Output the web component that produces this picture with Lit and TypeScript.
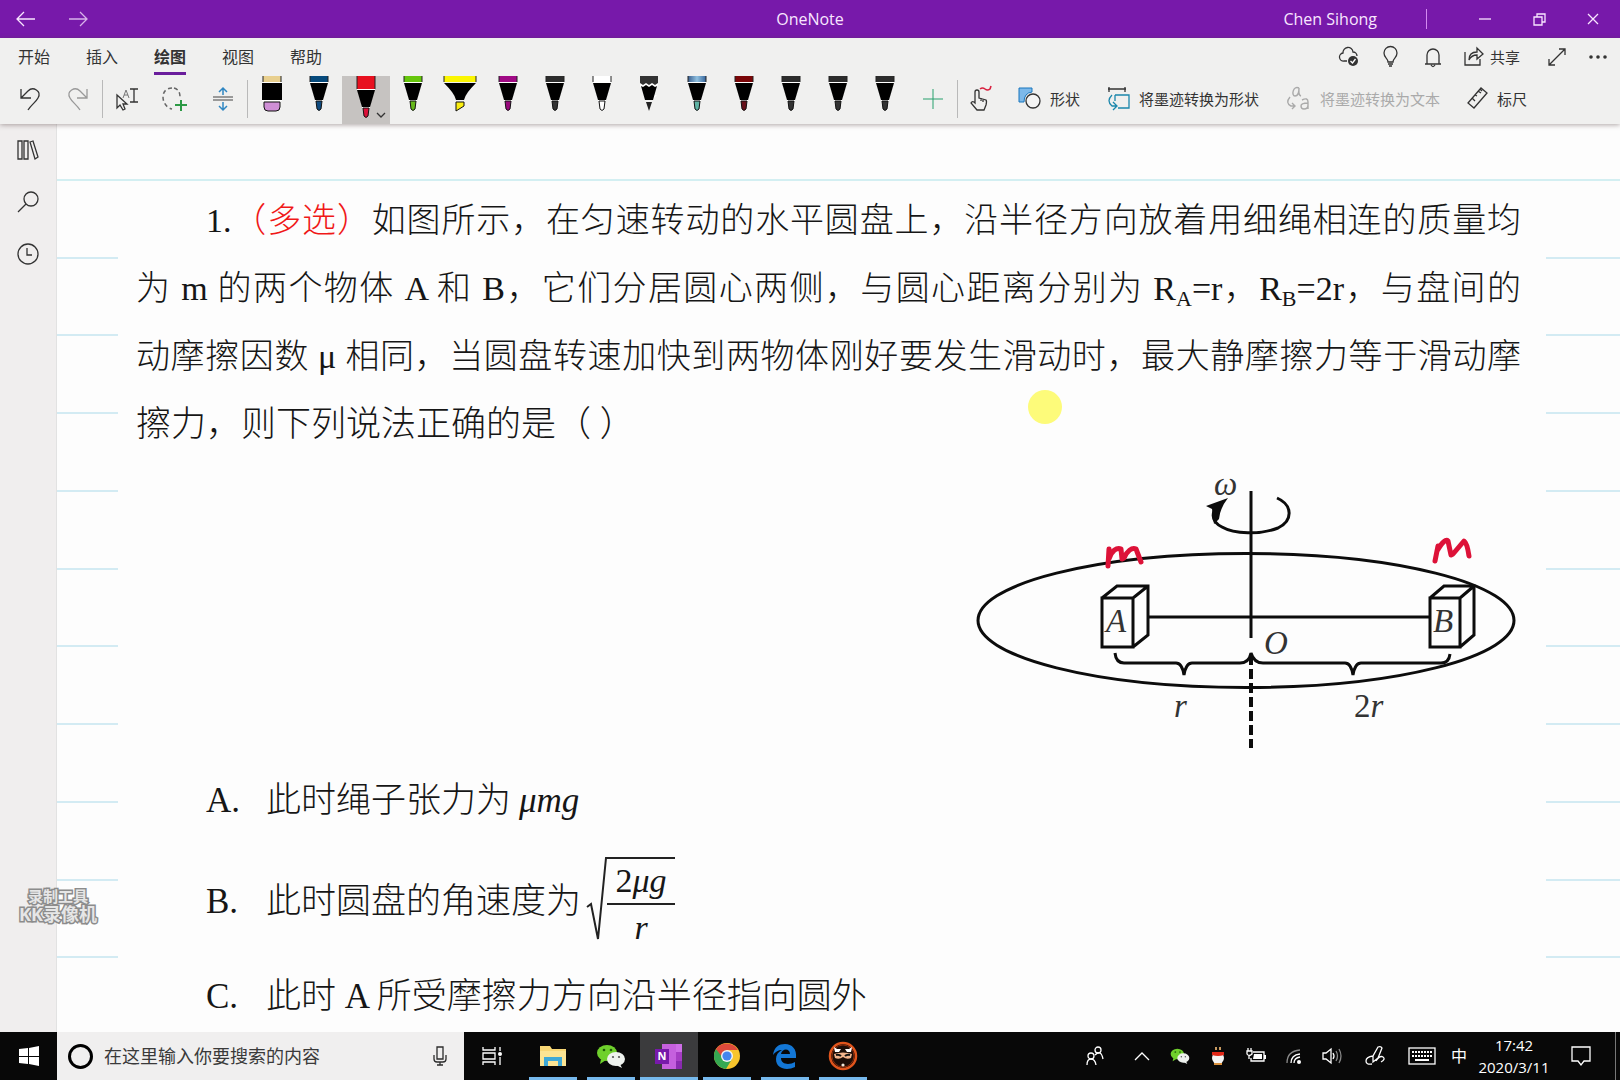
import { LitElement, html, svg, css, type TemplateResult } from "lit";
import { customElement } from "lit/decorators.js";
import { classMap } from "lit/directives/class-map.js";

interface Pen {
  name: string;
  cap: string;
  tip: string;
  kind?: "eraser" | "marker" | "pencil";
  on?: boolean;
}

const PENS: Pen[] = [
  { name: "橡皮擦", cap: "#e8cf8e", tip: "#cf8fd6", kind: "eraser" },
  { name: "蓝色笔", cap: "#064a7c", tip: "#0d4a80" },
  { name: "红色笔", cap: "#e8101f", tip: "#dc1038", on: true },
  { name: "绿色笔", cap: "#66c60c", tip: "#66b81a" },
  { name: "黄色荧光笔", cap: "#fbf602", tip: "#fbee10", kind: "marker" },
  { name: "紫色笔", cap: "#a00a85", tip: "#98087c" },
  { name: "黑色笔", cap: "#2c2c2c", tip: "#333333" },
  { name: "白色笔", cap: "#ffffff", tip: "#ffffff" },
  { name: "铅笔", cap: "#333333", tip: "#222222", kind: "pencil" },
  { name: "银河笔", cap: "url(#sky)", tip: "#5fb3a4" },
  { name: "熔岩笔", cap: "#7a0608", tip: "#66101a" },
  { name: "黑色笔 2", cap: "#2c2c2c", tip: "#333333" },
  { name: "黑色笔 3", cap: "#2c2c2c", tip: "#333333" },
  { name: "黑色笔 4", cap: "#2c2c2c", tip: "#333333" },
];

const icon = (w: number, h: number, body: unknown): TemplateResult =>
  html`<svg class="icon" width=${w} height=${h} viewBox="0 0 ${w} ${h}" aria-hidden="true">${body}</svg>`;

const penArt = (p: Pen) => {
  if (p.kind === "eraser")
    return svg`<rect x="8" y="0" width="18" height="6" fill=${p.cap}/><path d="M8 0v6M26 0v6" stroke="#222"/>
      <rect x="7" y="6" width="20" height="19" fill="#fff"/><rect x="7" y="7" width="20" height="17" fill="#000"/>
      <path d="M9 26h16v5q0 4-4 4h-8q-4 0-4-4z" fill=${p.tip} stroke="#111"/>`;
  if (p.kind === "marker")
    return svg`<rect x="1" y="0" width="32" height="6" fill=${p.cap}/><path d="M1 0v6M33 0v6" stroke="#222"/>
      <path d="M1 7h32q-5 5-8 9t-4 8h-8q-1-4-4-8t-8-9z" fill="#000"/>
      <path d="M13 26h8v4l-8 5z" fill=${p.tip} stroke="#111"/>`;
  if (p.kind === "pencil")
    return svg`<path d="M8 0h18v18l-6 6h-6L8 10z" fill="#fff"/><path d="M8 0h18v7l-3 2-3-2-3 2-3-2-3 2-3-2z" fill=${p.cap}/>
      <path d="M26 9v10h-5l5-10z" fill="#f0f0ef"/>
      <path d="M9 10l2 1 3-2 3 2 3-2 3 2 2-1-4 14h-8z" fill="#000"/><path d="M14 26h6l-3 9z" fill=${p.tip}/>`;
  const d = p.on ? 7 : 0;
  return svg`<rect x="8" y="0" width="18" height=${6 + d} fill=${p.cap}/><path d="M8 0v${6 + d}M26 0v${6 + d}" stroke="#222"/>
    <path d="M8 ${6 + d}h18v1h-18zM13 ${24 + d}h8v1h-8z" fill="#fff"/>
    <path d="M8 ${7 + d}h18l-5 17h-8z" fill="#000"/>
    <path d="M14 ${25 + d}h6l-1 8q-2 3-4 0z" fill=${p.tip} stroke="#111"/>`;
};

const BUBBLES = svg`<ellipse cx="11" cy="9" rx="10" ry="8" fill="#6fd02c"/><path d="M5 15l-1 5 6-4z" fill="#6fd02c"/>
  <circle cx="8" cy="6" r="1.3" fill="#1d5a08"/><circle cx="15" cy="6" r="1.3" fill="#1d5a08"/>
  <ellipse cx="20" cy="15" rx="9" ry="7" fill="#eef2ee"/><path d="M24 20l2 4-6-3z" fill="#eef2ee"/>
  <circle cx="17" cy="13" r="1.1" fill="#555"/><circle cx="23" cy="13" r="1.1" fill="#555"/>`;

const I = {
  back: icon(20, 16, svg`<path class="s" d="M19 8H1M8 1L1 8l7 7"/>`),
  forward: icon(20, 16, svg`<path class="s" d="M1 8h18M12 1l7 7-7 7"/>`),
  min: icon(12, 12, svg`<path class="s" d="M0 6h12"/>`),
  restore: icon(13, 13, svg`<path class="s" d="M1 4h8v8H1zM4 4V1h8v8H9"/>`),
  close: icon(12, 12, svg`<path class="s" d="M1 1l10 10M11 1L1 11"/>`),
  cloud: icon(22, 22, svg`<path class="s" d="M9 15H6a4 4 0 0 1-1-8 5 5 0 0 1 10-1 4 4 0 0 1 4 4"/><circle cx="15" cy="15" r="5" fill="#333"/><path d="M12.500 15l2 2 3-4" fill="none" stroke="#fff" stroke-width="1.300"/>`),
  bulb: icon(16, 22, svg`<path class="s" d="M5 16c0-4-4-4-4-9a6.500 6.500 0 0 1 13 0c0 5-4 5-4 9zM5 18h5M6 20h3"/>`),
  bell: icon(18, 20, svg`<path class="s" d="M1 17h16M3 17V8a6 6 0 0 1 12 0v9M7 18q2 3 4 0"/>`),
  share: icon(20, 20, svg`<path class="s" d="M1 6v13h15v-6M5 14c0-6 3-8 8-8V2l6 6-6 5V9c-4 0-6 1-8 5z"/>`),
  expand: icon(18, 18, svg`<path class="s" d="M1 17L17 1M11 1h6v6M1 11v6h6"/>`),
  dots: icon(20, 6, svg`<g fill="#333"><circle cx="3" cy="3" r="1.800"/><circle cx="10" cy="3" r="1.800"/><circle cx="17" cy="3" r="1.800"/></g>`),
  undo: icon(20, 24, svg`<path class="s" d="M1 2v9h10M1 11L8 4c5-5 14 0 10 7-2 4-7 7-10 12"/>`),
  redo: icon(20, 24, svg`<path class="s" d="M19 2v9H9M19 11l-7-7C7-1-2 4 2 11c2 4 7 7 10 12"/>`),
  select: icon(24, 24, svg`<path class="s" d="M2 8v13l3-3 3 5 2-1-2-5h4z"/><path d="M8 11l3-8 3 8M9 8h4" fill="none" stroke="#777"/><path class="s" d="M15 2h8M15 15h8M19 2v13"/>`),
  lasso: icon(26, 24, svg`<path d="M10 1C4 1 1 5 1 10c0 6 4 11 9 12M12 1c4 1 6 4 6 9" fill="none" stroke="#666" stroke-width="1.500" stroke-dasharray="4 3"/><path d="M19 13v11M13 18h12" stroke="#2c9a45" stroke-width="2"/>`),
  space: icon(22, 24, svg`<path d="M1 10h20M1 13h20" stroke="#444"/><path d="M11 8V1M7 5l4-4 4 4M11 15v8M7 19l4 4 4-4" fill="none" stroke="#2f86c2" stroke-width="1.500"/>`),
  plus: icon(22, 20, svg`<path d="M11 0v20M1 10h20" stroke="#27a06c"/>`),
  caret: icon(10, 6, svg`<path class="s" d="M1 1l4 4 4-4"/>`),
  touch: icon(24, 26, svg`<path class="s" d="M5 15V6q0-2 2-2t2 2v6l7 2q1 1 0 5l-2 5H7l-6-7q1-2 3-1l1 1zM11 12v3M13 13v3"/><path d="M10 3c5-4 5 4 10 0l1-3" fill="none" stroke="#d8203f" stroke-width="1.600"/>`),
  shapes: icon(24, 24, svg`<path d="M1 2h13v4q-8 1-8 10H1z" fill="#7db9ea" stroke="#1976bd"/><circle cx="15" cy="15" r="7" fill="#f4f4f4" stroke="#333" stroke-width="1.300"/>`),
  toShape: icon(24, 24, svg`<path class="s" d="M2 1v5M18 1v5M1 3h18"/><path d="M8 9h14v13H11M8 9v6" fill="none" stroke="#1b87ac" stroke-width="1.300"/><path d="M5 9q-6 6 0 11h4M6 16l4 4-4 4" fill="none" stroke="#1b87ac" stroke-width="1.300"/>`),
  toText: icon(26, 24, svg`<g fill="none" stroke="#aaa" stroke-width="1.400"><path d="M13 2c-6-3-8 8-4 8 3 0 4-4 4-8 0 4-1 7 2 8M4 11q-5 6 1 9h4M6 17l3 3-3 3"/><path d="M16 14q6-3 6 2v7M22 17q-7 0-7 3 0 3 3 3 4 0 4-4"/></g>`),
  ruler: icon(22, 22, svg`<path class="s" d="M1 16L14 1l6 5L7 21zM11 4l3 2M8 8l2 1M5 11l3 3M13 2l2 2"/>`),
  books: icon(22, 20, svg`<path class="s" d="M1 1h4v18H1zM7 1h4v18H7zM13 2l3-1 5 16-3 2z"/>`),
  search: icon(22, 22, svg`<circle class="s" cx="14" cy="8" r="7"/><path class="s" d="M9 13l-8 8"/>`),
  clock: icon(22, 22, svg`<circle class="s" cx="11" cy="11" r="10"/><path class="s" d="M10 5v7h5"/>`),
  win: icon(20, 20, svg`<path d="M0 3l9-1v8H0zM10 2l10-2v10H10zM0 11h9v7l-9-1zM10 11h10v9l-10-2z" fill="#fff"/>`),
  mic: icon(14, 20, svg`<path class="s" d="M4 1h6v12H4zM1 9v4q0 3 3 3h6q3 0 3-3V9M7 16v3M4 19h6"/>`),
  taskview: icon(22, 20, svg`<path class="s" d="M2 1v3h12V1M2 19v-3h12v3M2 7h12v6H2zM19 1v4M19 11v8"/><circle cx="19" cy="8" r="2" fill="#fff"/>`),
  explorer: icon(26, 22, svg`<path d="M0 1h10l2 3h14v17H0z" fill="#f8d775"/><path d="M0 6h26v15H0z" fill="#fbe493"/><path d="M4 21v-9h18v9h-4v-5H8v5z" fill="#3fa9d6"/>`),
  wechat: icon(30, 24, BUBBLES),
  onenote: icon(28, 26, svg`<path d="M7 1h20v25H7z" fill="#c560de"/><path d="M21 1h6v8h-6z" fill="#cd6ee6"/><path d="M21 9h6v9h-6z" fill="#a63dc4"/><path d="M21 18h6v8h-6z" fill="#8a2bb0"/><path d="M0 6h14v15H0z" fill="#7719aa"/><text x="7" y="17" text-anchor="middle" font-size="11" font-weight="700" fill="#fff">N</text>`),
  chrome: icon(28, 28, svg`<circle cx="14" cy="14" r="13" fill="#f7c52c"/><path d="M3 7A13 13 0 0 0 13 27l6-10-5-3z" fill="#35a852"/><path d="M3 7a13 13 0 0 1 22 1H14l-5 7z" fill="#dd4a3b"/><circle cx="14" cy="14" r="6" fill="#f4f4f4"/><circle cx="14" cy="14" r="4.600" fill="#4486ee"/>`),
  edge: icon(24, 26, svg`<path d="M0 12C1 4 6 1 12 1c7 0 12 5 11 14H8c0 7 9 7 14 4v5c-8 4-19 2-19-8 0-4 2-7 6-9-4 0-7 2-9 5zM8 11h9c0-6-8-6-9 0z" fill="#1377d6"/>`),
  kk: icon(30, 30, svg`<circle cx="15" cy="15" r="13" fill="#1b0d08" stroke="#e0541c" stroke-width="2.500"/><circle cx="15" cy="15" r="11" fill="none" stroke="#8a2c0c"/><path d="M6 13q9-3 18 0l-1 4q-4 2-8-1-4 3-8 1z" fill="#f2b48c"/><path d="M6 6l3 2h4l-2 3H7zM24 6l-3 2h-4l2 3h4z" fill="#fff"/><path d="M8 14q3-1 5 1M22 14q-3-1-5 1" fill="none" stroke="#111" stroke-width="2"/><circle cx="15" cy="24" r="1.600" fill="#f2e6d8"/>`),
  people: icon(18, 20, svg`<circle class="s" cx="12" cy="4" r="3"/><circle class="s" cx="5" cy="10" r="3"/><path class="s" d="M1 19q0-6 4-6t5 6M9 9q6-6 8 4"/>`),
  up: icon(16, 10, svg`<path class="s" d="M1 9l7-7 7 7"/>`),
  qq: icon(14, 18, svg`<path d="M4 0h2v3H4zM8 0h2v3H8z" fill="#c89a60"/><ellipse cx="7" cy="11" rx="6" ry="6" fill="#f4f4f4"/><path d="M1 5h12v3q-6 2-12 0z" fill="#e02818"/><path d="M3 16h8v2H3z" fill="#d9903c"/>`),
  battery: icon(20, 16, svg`<path class="s" d="M7 4h11v9H5v-3"/><path d="M8 6h8v5H7z" fill="#fff"/><path d="M18 7h2v4h-2z" fill="#fff"/><path class="s" d="M2 0v3M5 0v3M1 3h5v3q-3 3-5 0zM3 7v4"/>`),
  wifi: icon(16, 16, svg`<circle cx="13" cy="14" r="2" fill="#fff"/><path class="s" d="M8 15q0-5 6-6M5 15q0-8 9-9"/><path d="M1 15Q1 3 14 2" fill="none" stroke="#888" stroke-width="1.300"/>`),
  volume: icon(20, 18, svg`<path class="s" d="M1 6h3l5-4v14l-5-4H1zM11 6q2 3 0 6"/><path d="M14 4q3 5 0 10M17 2q4 7 0 14" fill="none" stroke="#888" stroke-width="1.300"/>`),
  ink: icon(20, 22, svg`<path class="s" d="M8 17V11l5-9q3-1 4 1l-4 10-5 4zM8 11q-7 1-7 5t6 3M11 16q4-6 7-4t-2 5"/>`),
  keyboard: icon(28, 18, svg`<rect class="s" x="1" y="1" width="26" height="16"/><path d="M4 5h20M4 9h20" stroke="#fff" stroke-width="2" stroke-dasharray="2 1"/><path d="M7 13h14" stroke="#fff" stroke-width="2"/>`),
  notice: icon(20, 20, svg`<path class="s" d="M1 1h18v14h-6l-3 4-3-4H1z"/>`),
};

@customElement("app-root")
export class AppRoot extends LitElement {
  static styles = css`
    :host {
      display: flex;
      flex-direction: column;
      height: 100vh;
      overflow: hidden;
      background: #fdfdfd;
      color: #333;
      font-family: "Open Sans", "Noto Sans CJK SC", sans-serif;
      font-size: 16px;
    }
    * { box-sizing: border-box; }
    button, input { font: inherit; color: inherit; background: none; border: 0; padding: 0; margin: 0; }
    button { display: flex; align-items: center; justify-content: center; }
    .icon { display: block; flex: none; overflow: visible; }
    .s { fill: none; stroke: currentColor; stroke-width: 1.3; }

    .titlebar {
      flex: none; height: 38px; display: grid; grid-template-columns: 1fr auto 1fr; align-items: center;
      background: #7719aa; color: #f9e6ff;
    }
    .titlebar h1 { margin: 0; font-size: 16px; line-height: 36px; font-weight: 400; }
    .nav { display: flex; }
    .nav button { width: 52px; height: 38px; }
    .dim { opacity: 0.75; }
    .winctl { display: flex; justify-content: flex-end; align-items: center; }
    .winctl button { width: 54px; height: 38px; }
    .user { margin-right: 49px; }
    .bar { width: 1px; height: 20px; background: #d48af0; margin-right: 31px; }

    .ribbon { flex: none; background: #f0f0ef; position: relative; box-shadow: 0 1px 5px rgba(80, 60, 60, 0.45); z-index: 1; }
    .tabs { height: 38px; display: flex; align-items: center; padding: 0 2px 0 18px; }
    .tabs .tab { width: 32px; height: 36px; margin-right: 36px; padding-bottom: 2px; border: solid transparent; border-width: 3px 0; white-space: nowrap; }
    .tabs .tab.on { font-weight: 700; border-bottom-color: #6a1e9c; }
    .tools-right { margin-left: auto; display: flex; align-items: center; }
    .tools-right button { width: 42px; height: 36px; }
    .tools-right .share { width: 76px; gap: 6px; font-size: 15px; margin-right: 6px; padding-bottom: 2px; }
    .tools-right .more { width: 40px; }
    .toolbar { display: flex; align-items: stretch; height: 48px; padding-left: 6px; font-size: 15px; }
    .toolbar .tool { width: 48px; padding-bottom: 3px; }
    .toolbar .tool.grey { color: #999; }
    .sep { flex: none; width: 1px; margin: 4px 0 6px; background: #b9b9b9; }
    .pens { flex: 0 0 661px; display: grid; grid-template-columns: repeat(14, 1fr); }
    .pen { position: relative; align-items: flex-start; }
    .pen.on { background: #c6c3c1; }
    .pen .caret { position: absolute; right: 4px; bottom: 6px; }
    .toolbar .wide { gap: 8px; padding: 0 15px 4px 12px; white-space: nowrap; }
    .toolbar .wide.grey { color: #aaa; }

    .work { flex: 1; min-height: 0; display: flex; position: relative; }
    .side { flex: 0 0 57px; background: #f0eeee; display: flex; flex-direction: column; border-right: 1px solid #e2e2e2; }
    .side button { height: 52px; }
    .notebook { flex: 1; min-width: 0; display: flex; flex-direction: column; padding-top: 55px; }
    .sheet { flex: 1; min-height: 0; display: grid; grid-template-columns: 61px 1fr 74px; border-top: 2px solid #d3eff2; }
    .rules { display: grid; grid-template-rows: repeat(11, 1fr); margin-bottom: -4px; }
    .rules i { border-bottom: 2px solid #d3ebf3; }
    .rules i:last-child { border: 0; }
    .doc {
      padding: 6px 25px 0 18px; min-width: 0; overflow: hidden; color: #161616;
      font-family: "Liberation Serif", "Noto Sans CJK SC", serif; font-weight: 300; font-size: 34px;
    }
    .doc p { margin: 0; line-height: 68px; white-space: nowrap; text-align: justify; text-align-last: justify; }
    .doc .first { padding-left: 70px; }
    .doc .last { text-align-last: left; font-size: 35px; text-spacing-trim: space-all; }
    .doc sub { font-size: 22px; line-height: 0; vertical-align: -6px; }
    .red { color: #f01818; }
    .figure { display: block; margin: 0 -19px 0 auto; }
    .figure text { font-size: 33px; font-style: italic; fill: #333; }
    .options { list-style: none; margin: 8px 0 0; padding: 0 0 0 70px; font-size: 35px; }
    .options li { display: flex; align-items: center; white-space: nowrap; line-height: 68px; }
    .options li > b { font-weight: 400; width: 60px; }
    .options .tall { height: 134px; }
    .options .short { margin-top: -6px; }
    .math { font-style: italic; margin-left: 8px; }
    .root { display: flex; margin-left: 6px; font-style: italic; font-size: 34px; }
    .frac { border-top: 2px solid #222; line-height: 38px; text-align: center; padding: 3px 0 0; width: 68px; }
    .frac span { display: block; }
    .frac span + span { border-top: 2px solid #222; margin-top: 3px; padding-top: 4px; }
    .frac i { font-style: normal; }
    .pointer { position: absolute; left: 1028px; top: 266px; width: 34px; height: 34px; border-radius: 50%; background: #fdfb7a; }
    .mark {
      position: absolute; left: 19px; top: 763px; text-align: center; font-weight: 700; font-size: 18px; line-height: 18px;
      color: #e6e6e6; -webkit-text-stroke: 3px #8c8c8c; paint-order: stroke fill;
    }
    .mark small { display: block; font-size: 15px; line-height: 18px; }

    .taskbar { flex: none; height: 48px; background: #080808; color: #fff; display: flex; }
    .start { width: 57px; }
    .searchbox { width: 407px; background: #f0efef; color: #2c2c2c; display: flex; align-items: center; padding: 0 17px 0 11px; }
    .ring { width: 25px; height: 25px; border: 3px solid #000; border-radius: 50%; flex: none; }
    .searchbox input { flex: 1; min-width: 0; height: 48px; padding-left: 11px; font-size: 18px; outline: 0; }
    .searchbox input::placeholder { color: #3a3a3a; opacity: 1; }
    .app { width: 58px; position: relative; }
    .app.first { width: 60px; padding-right: 4px; }
    .app.run::after { content: ""; position: absolute; left: 5px; right: 5px; bottom: 0; height: 3px; background: #76b9ed; }
    .app.cur { background: #3b3b3d; }
    .app.cur::after { left: 0; right: 0; }
    .tray { margin-left: auto; display: flex; align-items: center; }
    .tray button { width: 38px; height: 48px; }
    .tray .people { width: 56px; }
    .tray .w { width: 47px; }
    .tray .n { width: 28px; padding-bottom: 2px; }
    .tray .time { width: 82px; flex-direction: column; font-size: 15px; line-height: 22px; padding-bottom: 1px; }
    .tray .notice { width: 60px; padding-right: 8px; }
    .peek { width: 5px; height: 48px; border-left: 1px solid #777; }
  `;

  private pen(p: Pen) {
    return html`<button class=${classMap({ pen: true, on: !!p.on })} aria-label=${p.name} aria-pressed=${p.on ? "true" : "false"}>
      ${icon(34, 44, penArt(p))}${p.on ? html`<span class="caret">${I.caret}</span>` : null}
    </button>`;
  }

  private rules() {
    return html`<div class="rules">${Array.from({ length: 11 }, () => html`<i></i>`)}</div>`;
  }

  private figure() {
    return html`<svg class="figure" width="580" height="300" viewBox="0 0 580 300" role="img" aria-label="水平圆盘">
      <g fill="none" stroke="#0c0c0c" stroke-width="3">
        <ellipse cx="286" cy="161.500" rx="268" ry="67"/>
        <path d="M291 32V179M189 158H470"/>
        <path d="M291 196v93" stroke-width="4" stroke-dasharray="10 4"/>
        <path d="M317 39C333 46 333 62 318 69C300 76 274 75 262 68C254 64 252 58 254 52"/>
        <path d="M142 139h31v49h-31zM142 139l15-12h31v49l-15 12M173 139l15-12"/>
        <path d="M470 139h30v49h-30zM470 139l14-12h30v49l-14 12M500 139l14-12"/>
        <path d="M155 194q1 10 9 10h52q6 0 8 12q2-12 8-12h48q9 0 11-10q3 10 12 10h82q6 0 8 12q2-12 8-12h80q8 0 9-9"/>
      </g>
      <path d="M268 39L246 47L252 50L254 65L259 60Q260 49 268 39z" fill="#0c0c0c"/>
      <text x="254" y="36">ω</text>
      <text x="146" y="173">A</text><text x="473" y="173">B</text><text x="304" y="195">O</text>
      <text x="214" y="258">r</text><text x="394" y="258"><tspan font-style="normal">2</tspan>r</text>
      <g fill="none" stroke="#dd1238" stroke-width="5" stroke-linecap="round" stroke-linejoin="round">
        <path d="M149 90L148 107M149 100C151 92 157 88 161 90L162 100L164 99C167 92 172 88 176 90L181 103"/>
        <path d="M478 87L475 102M477 92C480 87 485 79 488 82L491 96L493 95L504 82C507 84 508 90 509 97"/>
      </g>
    </svg>`;
  }

  render() {
    const app = (label: string, art: unknown, cls = "run") =>
      html`<button class="app ${cls}" aria-label=${label}>${art}</button>`;
    return html`
      <header class="titlebar">
        <div class="nav">
          <button aria-label="后退">${I.back}</button><button class="dim" aria-label="前进">${I.forward}</button>
        </div>
        <h1>OneNote</h1>
        <div class="winctl">
          <span class="user">Chen Sihong</span><span class="bar"></span>
          <button aria-label="最小化">${I.min}</button><button aria-label="还原">${I.restore}</button><button aria-label="关闭">${I.close}</button>
        </div>
      </header>

      <div class="ribbon">
        <nav class="tabs">
          ${["开始", "插入", "绘图", "视图", "帮助"].map(
            (t) => html`<button class=${classMap({ tab: true, on: t === "绘图" })}>${t}</button>`
          )}
          <div class="tools-right">
            <button aria-label="同步">${I.cloud}</button><button aria-label="操作说明">${I.bulb}</button>
            <button aria-label="通知">${I.bell}</button><button class="share">${I.share}共享</button>
            <button aria-label="全屏">${I.expand}</button><button class="more" aria-label="更多">${I.dots}</button>
          </div>
        </nav>
        <div class="toolbar">
          <button class="tool" aria-label="撤消">${I.undo}</button><button class="tool grey" aria-label="恢复">${I.redo}</button>
          <span class="sep"></span>
          <button class="tool" aria-label="选择对象">${I.select}</button><button class="tool" aria-label="套索选择">${I.lasso}</button>
          <button class="tool" aria-label="插入空间">${I.space}</button>
          <span class="sep"></span>
          <svg width="0" height="0" aria-hidden="true"><defs><linearGradient id="sky"><stop offset="0" stop-color="#3c5f8e"/><stop offset=".5" stop-color="#8fc0e0"/><stop offset="1" stop-color="#35639a"/></linearGradient></defs></svg>
          <div class="pens">${PENS.map((p) => this.pen(p))}</div>
          <button class="tool" aria-label="添加笔">${I.plus}</button>
          <span class="sep"></span>
          <button class="tool" aria-label="触摸绘图">${I.touch}</button>
          <button class="wide">${I.shapes}形状</button>
          <button class="wide">${I.toShape}将墨迹转换为形状</button>
          <button class="wide grey">${I.toText}将墨迹转换为文本</button>
          <button class="wide">${I.ruler}标尺</button>
        </div>
      </div>

      <div class="work">
        <nav class="side">
          <button aria-label="笔记本">${I.books}</button><button aria-label="搜索">${I.search}</button><button aria-label="最近">${I.clock}</button>
        </nav>
        <main class="notebook">
          <div class="sheet">
            ${this.rules()}
            <article class="doc">
              <p class="first">1.<span class="red">（多选）</span>如图所示，在匀速转动的水平圆盘上，沿半径方向放着用细绳相连的质量均</p>
              <p>为 m 的两个物体 A 和 B，它们分居圆心两侧，与圆心距离分别为 R<sub>A</sub>=r，R<sub>B</sub>=2r，与盘间的</p>
              <p>动摩擦因数 μ 相同，当圆盘转速加快到两物体刚好要发生滑动时，最大静摩擦力等于滑动摩</p>
              <p class="last">擦力，则下列说法正确的是（ ）</p>
              ${this.figure()}
              <ol class="options">
                <li><b>A.</b>此时绳子张力为<span class="math">μmg</span></li>
                <li class="tall"><b>B.</b>此时圆盘的角速度为<span class="root">
                  <svg class="icon" width="20" height="84" viewBox="0 0 20 84" aria-hidden="true"><path d="M0 50l4-3 7 35L19 1h1" fill="none" stroke="#222" stroke-width="2"/></svg>
                  <span class="frac"><span><i>2</i>μg</span><span>r</span></span></span></li>
                <li class="short"><b>C.</b>此时 A 所受摩擦力方向沿半径指向圆外</li>
              </ol>
            </article>
            ${this.rules()}
          </div>
        </main>
        <span class="pointer"></span>
        <div class="mark"><small>录制工具</small>KK录像机</div>
      </div>

      <footer class="taskbar">
        <button class="start" aria-label="开始菜单">${I.win}</button>
        <div class="searchbox">
          <span class="ring"></span>
          <input type="text" aria-label="搜索" placeholder="在这里输入你要搜索的内容" />
          <button aria-label="语音">${I.mic}</button>
        </div>
        ${app("任务视图", I.taskview, "first")}${app("文件资源管理器", I.explorer)}${app("微信", I.wechat)}
        ${app("OneNote", I.onenote, "run cur")}${app("Chrome", I.chrome)}${app("Edge", I.edge)}${app("KK录像机", I.kk)}
        <div class="tray">
          <button class="people" aria-label="人脉">${I.people}</button><button aria-label="显示隐藏的图标">${I.up}</button>
          <button aria-label="微信消息"><svg class="icon" width="20" height="16" viewBox="0 0 30 24" aria-hidden="true">${BUBBLES}</svg></button>
          <button aria-label="QQ">${I.qq}</button><button aria-label="电源">${I.battery}</button><button aria-label="网络">${I.wifi}</button>
          <button aria-label="音量">${I.volume}</button><button class="w" aria-label="笔工作区">${I.ink}</button>
          <button class="w" aria-label="触摸键盘">${I.keyboard}</button><button class="n">中</button>
          <button class="time"><span>17:42</span><span>2020/3/11</span></button>
          <button class="notice" aria-label="操作中心">${I.notice}</button><span class="peek"></span>
        </div>
      </footer>
    `;
  }
}
